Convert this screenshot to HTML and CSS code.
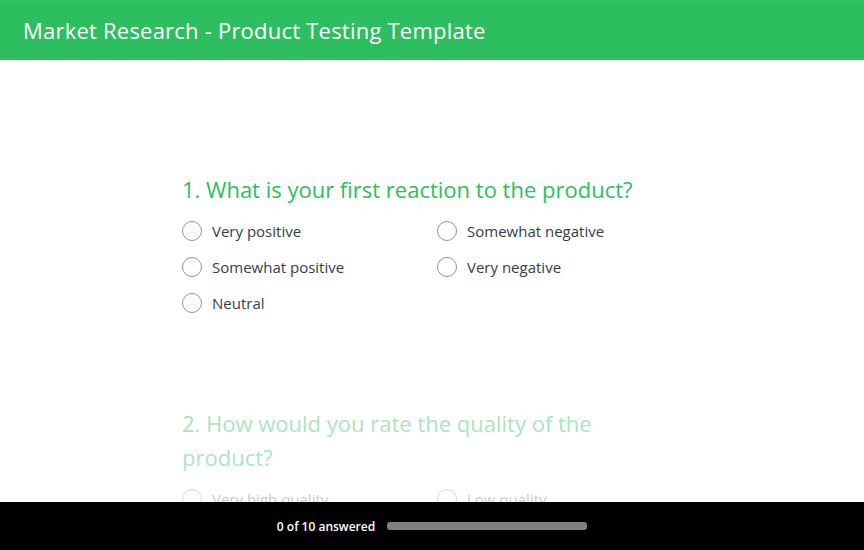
FILE: index.html
```html
<!DOCTYPE html>
<html>
<head>
<meta charset="utf-8">
<link rel="stylesheet" href="styles.css">
</head>
<body>
<header class="topbar">
  <h1 class="title">Market Research - Product Testing Template</h1>
</header>
<main class="survey">
  <section class="question">
    <h2 class="q-title">1. What is your first reaction to the product?</h2>
    <div class="options">
      <label class="opt"><span class="radio"></span>Very positive</label>
      <label class="opt"><span class="radio"></span>Somewhat negative</label>
      <label class="opt"><span class="radio"></span>Somewhat positive</label>
      <label class="opt"><span class="radio"></span>Very negative</label>
      <label class="opt"><span class="radio"></span>Neutral</label>
    </div>
  </section>
  <section class="question faded">
    <h2 class="q-title">2. How would you rate the quality of the product?</h2>
    <div class="options">
      <label class="opt"><span class="radio"></span>Very high quality</label>
      <label class="opt"><span class="radio"></span>Low quality</label>
    </div>
  </section>
</main>
<footer class="progress">
  <span class="progress-text">0 of 10 answered</span>
  <span class="progress-bar"></span>
</footer>
</body>
</html>
```
FILE: styles.css
```css
* { box-sizing: border-box; }
html, body { margin: 0; padding: 0; overflow: hidden; }
body {
  font-family: "Open Sans", "Liberation Sans", sans-serif;
  background: #fff;
  width: 864px;
  height: 550px;
}
.topbar {
  height: 60px;
  background: #2dbe60;
  display: flex;
  align-items: center;
  padding: 0 0 0 23px;
  border-top: 3px solid #33c266;
}
.title {
  margin: 0 0 4px 0;
  font-size: 22px;
  font-weight: 400;
  color: #fff;
  letter-spacing: 0.22px;
}
.survey {
  padding: 112px 0 0 182px;
  width: 682px;
  height: 490px;
  overflow: hidden;
}
.question { margin-bottom: 93px; }
.q-title {
  margin: 0 0 15px 0;
  font-size: 22px;
  line-height: 34px;
  font-weight: 400;
  color: #2dbe60;
}
.options {
  display: grid;
  grid-template-columns: 255px 245px;
  row-gap: 16px;
}
.opt {
  display: flex;
  align-items: center;
  gap: 10px;
  height: 20px;
  font-size: 15px;
  color: #333e48;
}
.radio {
  width: 20px;
  height: 20px;
  border: 1px solid #8d959b;
  border-radius: 50%;
  flex: none;
}
.faded .q-title { color: #abe5c0; }
.faded .opt { color: #c8cbce; }
.faded .radio { border-color: #d6d9db; }
.progress {
  position: fixed;
  left: 0;
  right: 0;
  bottom: 0;
  height: 48px;
  background: #000;
  display: flex;
  align-items: center;
  justify-content: center;
  gap: 12px;
}
.progress-text {
  color: #fff;
  font-size: 12px;
  font-weight: 600;
}
.progress-bar {
  width: 200px;
  height: 8px;
  border-radius: 3px;
  background: #808080;
}
```
